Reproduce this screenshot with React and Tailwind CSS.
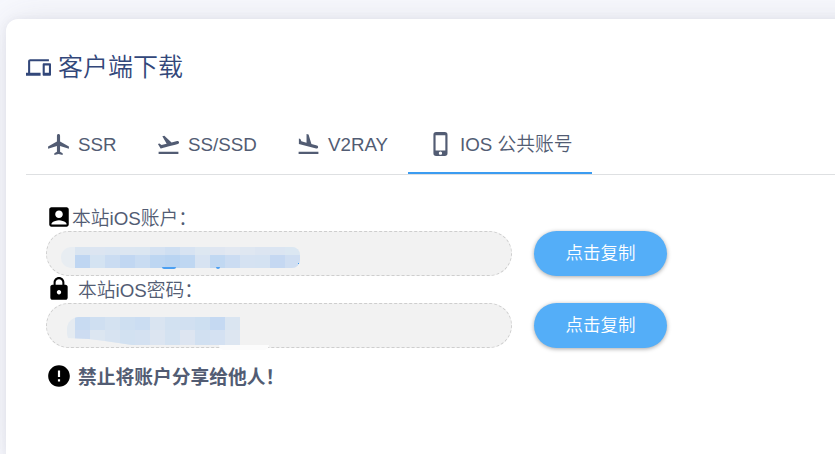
import { MdDevices, MdLocalAirport, MdFlightTakeoff, MdFlightLand, MdPhoneIphone, MdAccountBox, MdLock, MdError } from "react-icons/md";

const tabs = [
  { label: "SSR", Icon: MdLocalAirport, width: "w-[110px]" },
  { label: "SS/SSD", Icon: MdFlightTakeoff, width: "w-[140px]" },
  { label: "V2RAY", Icon: MdFlightLand, width: "w-[132px]" },
  { label: "IOS 公共账号", Icon: MdPhoneIphone, width: "w-[184px]", active: true },
];

const accountMask = [
  ["#dae5f1", "#dce5f1", "#dae5f2", "#dce6f1", "#dbe6f1", "#d5e2f2", "#cfdff2", "#d7e3f2", "#dde7f1", "#dfe6f1", "#e2e8f1", "#dfe7f1", "#dce5f1", "#dbe5f2", "#dbe7f2"],
  ["#bfd6f2", "#d4e3f2", "#cadcf2", "#c1d7f2", "#c9dcf2", "#bdd6f2", "#b9d4f2", "#bfd7f2", "#d7e3f2", "#c1d8f2", "#cbdcf2", "#d5e2f2", "#d4e2f2", "#c5d8f2", "#cfdef2"],
];

const passwordMask = [
  ["#c8dbf2", "#cfdff1", "#d4e2f1", "#cedff1", "#cbddf2", "#d9e4f1", "#d2e1f1", "#d1e0f1", "#cddff1", "#c5d9f2", "#dae5f1"],
  ["#cddcf1", "#dce6f1", "#d7e3f1", "#d2e1f1", "#d4e1f1", "#dce5f1", "#d4e2f1", "#dde5f1", "#d1e0f1", "#d4e1f2", "#dde6f1"],
];

function Mosaic({ rows, heights }) {
  return (
    <div>
      {rows.map((row, r) => (
        <div key={r} className={`flex ${heights[r]}`}>
          {row.map((color, i) => (
            <span key={i} className="w-[15px]" style={{ backgroundColor: color }} />
          ))}
        </div>
      ))}
    </div>
  );
}

function CopyButton() {
  return (
    <button className="h-[45px] w-[133px] rounded-full bg-[#54aef8] pb-px text-[17.5px] font-[350] text-white shadow-[0_1px_4px_rgba(0,0,0,0.35)]">
      点击复制
    </button>
  );
}

export default function App() {
  return (
    <div className="h-[454px] w-[835px] overflow-hidden bg-[#f8f9fe] pl-[6px] pt-[19px] text-[18.75px] text-[#525f7f] [font-family:'Liberation_Sans','Noto_Sans_CJK_SC',sans-serif]">
      <section className="h-[446px] w-[900px] rounded-xl bg-white pl-5 pt-[29px] shadow-[0_0_40px_rgba(90,95,110,0.13),0_0_8px_rgba(90,95,110,0.08)]">
        <h1 className="flex h-[38px] items-center gap-[7px] text-[25px] font-[350] text-[#32477a]">
          <MdDevices className="size-[25px]" />
          <span className="pt-[2px]">客户端下载</span>
        </h1>
        <nav className="mt-[28px] flex h-[61px] border-b border-[#dee0e2] text-[#525c73]">
          {tabs.map(({ label, Icon, width, active }) => (
            <div key={label} className={`flex h-[60px] items-center gap-[7px] pl-5 pt-[2px] font-[350] ${width} ${active ? "border-b-2 border-[#3b9cf1]" : "border-b-2 border-transparent"}`}>
              <span className="flex size-[25px] shrink-0 items-center justify-center">
                <Icon className={active ? "size-[26px] shrink-0" : "size-[25px] shrink-0"} />
              </span>
              <span className="whitespace-nowrap pt-[3px]">{label}</span>
            </div>
          ))}
        </nav>
        <div className="pl-5 pt-[29px] text-[#525c73]">
          <div className="flex h-[27px] items-center font-[350]">
            <MdAccountBox className="mb-px size-[26px] text-black" />
            <span className="pt-1">本站iOS账户：</span>
          </div>
          <div className="flex h-[45px] gap-[22px]">
            <div className="flex h-[45px] w-[466px] rounded-full border border-dashed border-[#cecece] bg-[#f2f2f2] pl-[14px] pt-[15px]">
              <div className="relative h-[23px]">
                <div className="h-[21px] overflow-hidden rounded-l-[10px] rounded-r-[8px] bg-[#e8edf2] pl-[14px]">
                  <Mosaic rows={accountMask} heights={["h-[8px]", "h-[13px]"]} />
                </div>
                <span className="absolute left-[101px] top-[20px] h-[2px] w-[14px] rounded-b-full bg-[#4b9ff2]" />
                <span className="absolute left-[155px] top-[20px] h-[2px] w-1 rounded-b-sm bg-[#4b9ff2]" />
                <span className="absolute left-[237px] top-[16px] size-px bg-[#3b9cf1]" />
              </div>
            </div>
            <CopyButton />
          </div>
          <div className="flex h-[27px] items-center gap-[6px] font-[350]">
            <MdLock className="mb-[2px] size-[26px] text-black" />
            <span className="pt-[3px]">本站iOS密码：</span>
          </div>
          <div className="flex h-[45px] gap-[22px]">
            <div className="relative flex h-[45px] w-[466px] rounded-full border border-dashed border-[#cecece] bg-[#f2f2f2] pl-[20px] pt-[13px]">
              <div className="h-[28px] overflow-hidden rounded-l-[12px] bg-[#e5ebf1] pl-[8px] [clip-path:polygon(0_0,100%_0,100%_100%,65px_100%,38px_24px,22px_22px,0_21px)]">
                <Mosaic rows={passwordMask} heights={["h-[13px]", "h-[15px]"]} />
              </div>
              <span className="absolute left-[172px] top-[41px] h-[5px] w-[50px] rounded-b-full bg-[#fcfcfc]" />
            </div>
            <CopyButton />
          </div>
          <div className="mt-[14px] flex h-[28px] items-center gap-[6px] font-bold">
            <MdError className="size-[26px] text-black" />
            <span className="pt-[5px]">禁止将账户分享给他人！</span>
          </div>
        </div>
      </section>
    </div>
  );
}
